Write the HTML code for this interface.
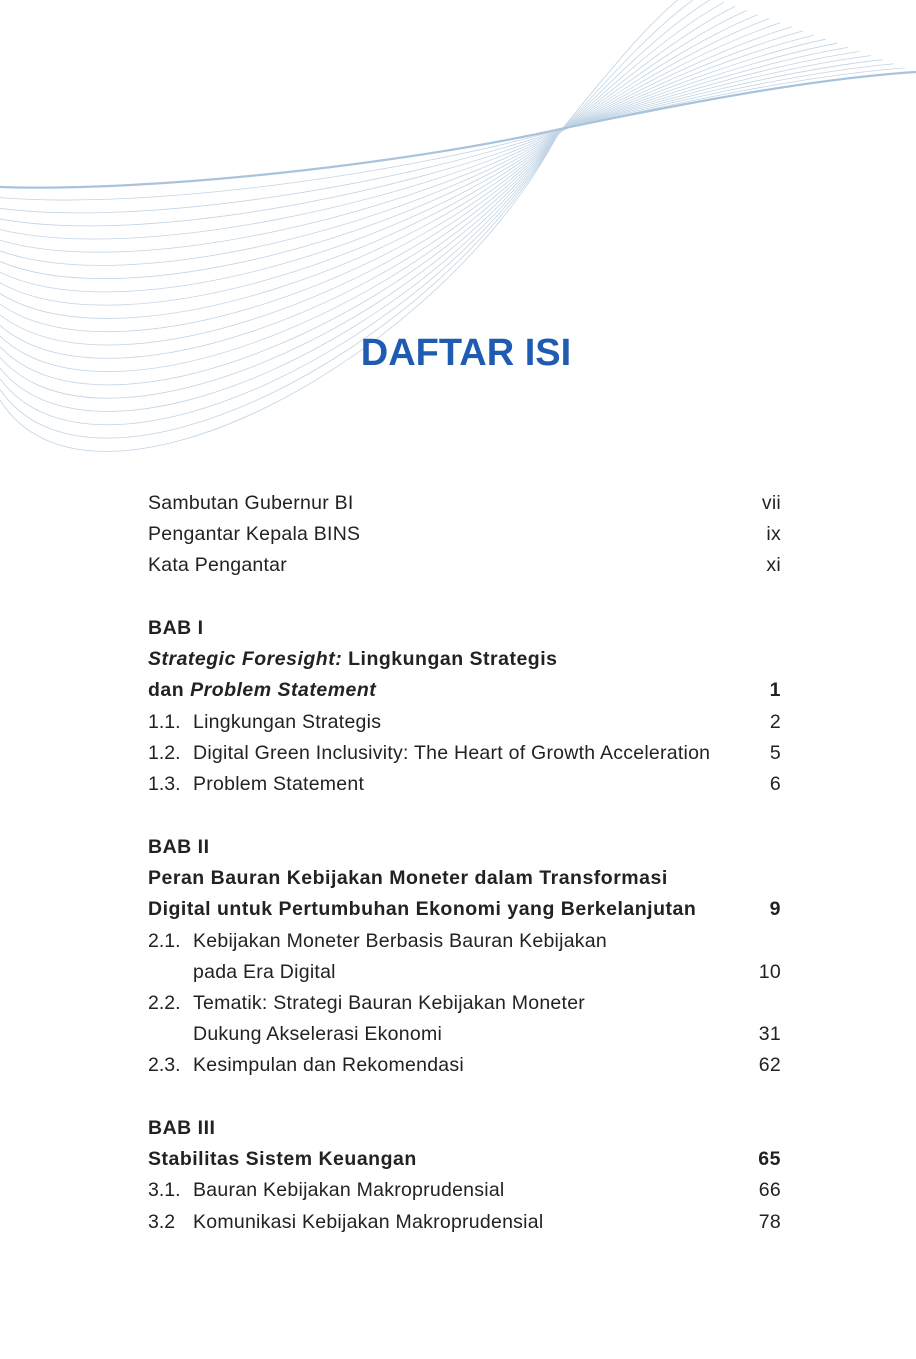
<!DOCTYPE html>
<html><head><meta charset="utf-8">
<style>
html,body{margin:0;padding:0;background:#fff;}
body{width:916px;height:1359px;position:relative;overflow:hidden;font-family:"Liberation Sans",sans-serif;color:#222;}
svg{position:absolute;left:0;top:0;}
h1{position:absolute;left:0;width:932px;top:332px;margin:0;text-align:center;font-size:38px;font-weight:bold;color:#1f5bb0;letter-spacing:0px;}
.r{position:absolute;left:148px;width:633px;height:31px;line-height:31px;font-size:19.5px;letter-spacing:0.25px;white-space:nowrap;margin-top:2px;}
.r.b{letter-spacing:0.5px;}
.r .p{position:absolute;right:0;top:0;}
.r .n{display:inline-block;width:45px;letter-spacing:0;}
.b{font-weight:bold;}
.i{padding-left:45px;}
</style></head><body>
<svg width="916" height="1359" id="w"></svg>
<h1>DAFTAR ISI</h1>

<div class="r" style="top:486px">Sambutan Gubernur BI<span class="p">vii</span></div>
<div class="r" style="top:517px">Pengantar Kepala BINS<span class="p">ix</span></div>
<div class="r" style="top:548px">Kata Pengantar<span class="p">xi</span></div>

<div class="r b" style="top:611px">BAB I</div>
<div class="r b" style="top:642px"><i>Strategic Foresight:</i> Lingkungan Strategis</div>
<div class="r b" style="top:673px">dan <i>Problem Statement</i><span class="p">1</span></div>
<div class="r" style="top:705px"><span class="n">1.1.</span>Lingkungan Strategis<span class="p">2</span></div>
<div class="r" style="top:736px"><span class="n">1.2.</span>Digital Green Inclusivity: The Heart of Growth Acceleration<span class="p">5</span></div>
<div class="r" style="top:767px"><span class="n">1.3.</span>Problem Statement<span class="p">6</span></div>

<div class="r b" style="top:830px">BAB II</div>
<div class="r b" style="top:861px">Peran Bauran Kebijakan Moneter dalam Transformasi</div>
<div class="r b" style="top:892px">Digital untuk Pertumbuhan Ekonomi yang Berkelanjutan<span class="p">9</span></div>
<div class="r" style="top:924px"><span class="n">2.1.</span>Kebijakan Moneter Berbasis Bauran Kebijakan</div>
<div class="r i" style="top:955px;width:588px">pada Era Digital<span class="p">10</span></div>
<div class="r" style="top:986px"><span class="n">2.2.</span>Tematik: Strategi Bauran Kebijakan Moneter</div>
<div class="r i" style="top:1017px;width:588px">Dukung Akselerasi Ekonomi<span class="p">31</span></div>
<div class="r" style="top:1048px"><span class="n">2.3.</span>Kesimpulan dan Rekomendasi<span class="p">62</span></div>

<div class="r b" style="top:1111px">BAB III</div>
<div class="r b" style="top:1142px">Stabilitas Sistem Keuangan<span class="p">65</span></div>
<div class="r" style="top:1173px"><span class="n">3.1.</span>Bauran Kebijakan Makroprudensial<span class="p">66</span></div>
<div class="r" style="top:1205px"><span class="n">3.2</span>Komunikasi Kebijakan Makroprudensial<span class="p">78</span></div>

<script>
(function(){
var s=document.getElementById('w'),N=20,h='';
function L(a,b,t){return a+(b-a)*t;}
for(var i=N;i>=0;i--){
 var t=i/N;
 var y0=L(187,400,t), c1x=L(150,90,t), c1y=L(192,545,t), c2x=L(400,440,t), c2y=L(165,360,t);
 var cx=L(565,558,t), cy=L(128,134,t);
 var d1x=L(700,610,t), d1y=L(100,70,t), d2x=L(820,650,t), d2y=L(78,20,t), ex=L(916,690,t), ey=L(72,-10,t);
 var d='M0,'+y0+' C'+c1x+','+c1y+' '+c2x+','+c2y+' '+cx+','+cy+' C'+d1x+','+d1y+' '+d2x+','+d2y+' '+ex+','+ey;
 var w=i==0?2.2:0.8, c=i==0?'#a9c3dc':'#c2d4e5';
 h+='<path d="'+d+'" fill="none" stroke="'+c+'" stroke-width="'+w+'"/>';
}
s.innerHTML=h;
})();
</script>
</body></html>
